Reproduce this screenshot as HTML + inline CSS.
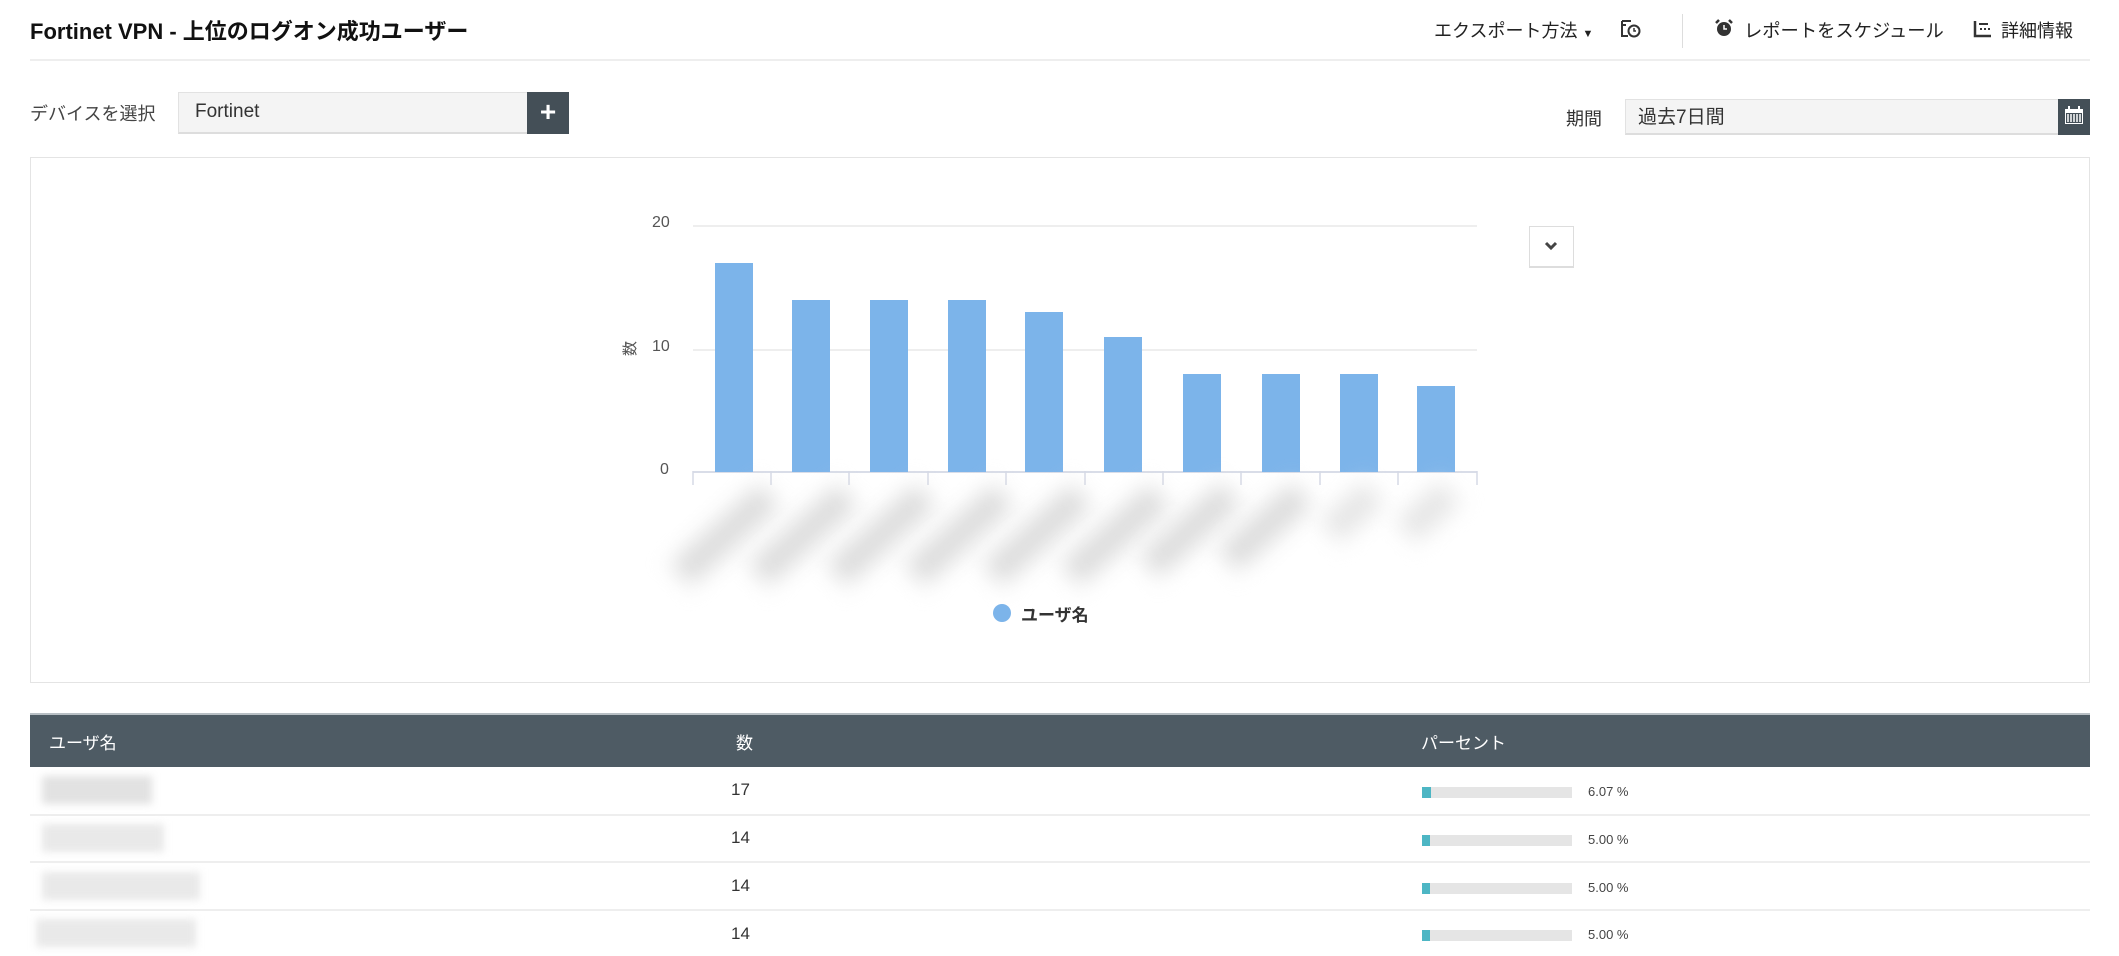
<!DOCTYPE html>
<html><head><meta charset="utf-8">
<style>
*{margin:0;padding:0;box-sizing:border-box}
body{width:2119px;height:956px;background:#fff;font-family:"Liberation Sans","Noto Sans CJK JP",sans-serif;color:#222;position:relative;overflow:hidden}
.a{position:absolute;white-space:nowrap}
.blur{position:absolute;background:#d8d8d8;filter:blur(5px)}
.lb{position:absolute;width:120px;height:30px;transform:rotate(-42deg);background:#dcdcdc;filter:blur(11px)}
</style></head><body>
<div class="a" style="left:30px;top:14px;font-size:22px;font-weight:bold;color:#111">Fortinet VPN - 上位のログオン成功ユーザー</div>
<div class="a" style="left:30px;top:59px;width:2060px;height:2px;background:#eeeeee"></div>

<div class="a" style="left:1434px;top:17px;font-size:18px;color:#222">エクスポート方法 <span style="font-size:11px">▼</span></div>
<svg class="a" style="left:1620px;top:19px" width="22" height="20" viewBox="0 0 22 20"><path d="M2 2h9M2 2v15h6M2 6h4" stroke="#333" stroke-width="2" fill="none"/><circle cx="14" cy="12" r="5.5" stroke="#333" stroke-width="2" fill="none"/><path d="M14 9v3h2" stroke="#333" stroke-width="1.5" fill="none"/></svg>
<div class="a" style="left:1682px;top:14px;width:1px;height:34px;background:#ddd"></div>
<svg class="a" style="left:1714px;top:18px" width="20" height="20" viewBox="0 0 20 20"><circle cx="10" cy="11" r="7" fill="#333"/><path d="M2 5l3-3M18 5l-3-3" stroke="#333" stroke-width="2.5"/><path d="M10 7v4h3" stroke="#fff" stroke-width="1.5" fill="none"/></svg>
<div class="a" style="left:1744px;top:17px;font-size:18.3px">レポートをスケジュール</div>
<svg class="a" style="left:1973px;top:20px" width="19" height="18" viewBox="0 0 19 18"><path d="M2 1v15h16" stroke="#333" stroke-width="2.5" fill="none"/><path d="M6 4h9M7 9h2M11 9h2M15 9h2" stroke="#333" stroke-width="2"/></svg>
<div class="a" style="left:2001px;top:17px;font-size:18px">詳細情報</div>

<div class="a" style="left:30px;top:100px;font-size:18px;color:#444">デバイスを選択</div>
<div class="a" style="left:178px;top:92px;width:350px;height:42px;background:#f4f4f4;border:1px solid #e2e2e2;border-bottom:2px solid #ddd"></div>
<div class="a" style="left:195px;top:101px;font-size:19px;color:#333">Fortinet</div>
<div class="a" style="left:527px;top:92px;width:42px;height:42px;background:#444f57;color:#fff;font-size:28px;font-weight:bold;text-align:center;line-height:40px">+</div>

<div class="a" style="left:1566px;top:105px;font-size:18px;color:#333">期間</div>
<div class="a" style="left:1625px;top:99px;width:434px;height:36px;background:#f4f4f4;border:1px solid #e2e2e2;border-bottom:2px solid #ddd"></div>
<div class="a" style="left:1638px;top:102px;font-size:19px;color:#333">過去7日間</div>
<div class="a" style="left:2058px;top:99px;width:32px;height:36px;background:#444f57"></div>
<svg class="a" style="left:2062px;top:104px" width="24" height="24" viewBox="0 0 24 24"><rect x="3" y="5" width="18" height="15" fill="#fff"/><rect x="4" y="9" width="16" height="10" fill="#444f57"/><path d="M6 10v8M9 10v8M12 10v8M15 10v8M18 10v8" stroke="#fff" stroke-width="1.5"/><path d="M7 2v5M17 2v5" stroke="#fff" stroke-width="2"/></svg>

<div class="a" style="left:30px;top:157px;width:2060px;height:526px;border:1px solid #e4e4e4"></div>
<div class="a" style="left:693px;top:225px;width:784px;height:2px;background:#eee"></div>
<div class="a" style="left:693px;top:349px;width:784px;height:2px;background:#eee"></div>
<div class="a" style="left:652px;top:214px;font-size:16px;color:#555">20</div>
<div class="a" style="left:652px;top:338px;font-size:16px;color:#555">10</div>
<div class="a" style="left:660px;top:461px;font-size:16px;color:#555">0</div>
<div class="a" style="left:622px;top:338px;font-size:15px;color:#555;transform:rotate(-90deg)">数</div>

<div class="a" style="left:693px;top:471px;width:784px;height:2px;background:#d9dde8"></div>
<svg class="a" style="left:692px;top:471px" width="788" height="14"><g stroke="#d6dae6" stroke-width="1.5"><path d="M1 0v14M79 0v14M157 0v14M236 0v14M314 0v14M393 0v14M471 0v14M549 0v14M628 0v14M706 0v14M785 0v14"/></g></svg>

<div class="a" style="left:715px;top:263px;width:38px;height:209px;background:#7cb4ea"></div>
<div class="a" style="left:792px;top:300px;width:38px;height:172px;background:#7cb4ea"></div>
<div class="a" style="left:870px;top:300px;width:38px;height:172px;background:#7cb4ea"></div>
<div class="a" style="left:948px;top:300px;width:38px;height:172px;background:#7cb4ea"></div>
<div class="a" style="left:1025px;top:312px;width:38px;height:160px;background:#7cb4ea"></div>
<div class="a" style="left:1104px;top:337px;width:38px;height:135px;background:#7cb4ea"></div>
<div class="a" style="left:1183px;top:374px;width:38px;height:98px;background:#7cb4ea"></div>
<div class="a" style="left:1262px;top:374px;width:38px;height:98px;background:#7cb4ea"></div>
<div class="a" style="left:1340px;top:374px;width:38px;height:98px;background:#7cb4ea"></div>
<div class="a" style="left:1417px;top:386px;width:38px;height:86px;background:#7cb4ea"></div>

<div class="lb" style="left:665px;top:520px"></div>
<div class="lb" style="left:743px;top:520px"></div>
<div class="lb" style="left:821px;top:520px"></div>
<div class="lb" style="left:899px;top:520px"></div>
<div class="lb" style="left:977px;top:520px"></div>
<div class="lb" style="left:1055px;top:520px"></div>
<div class="lb" style="left:1135px;top:515px;width:110px"></div>
<div class="lb" style="left:1215px;top:512px;width:100px"></div>
<div class="lb" style="left:1322px;top:497px;width:60px;background:#e6e6e6"></div>
<div class="lb" style="left:1398px;top:497px;width:60px;background:#e6e6e6"></div>

<div class="a" style="left:993px;top:604px;width:18px;height:18px;border-radius:50%;background:#7cb4ea"></div>
<div class="a" style="left:1021px;top:601px;font-size:17px;font-weight:bold;color:#333">ユーザ名</div>

<div class="a" style="left:1529px;top:226px;width:45px;height:42px;border:1px solid #ddd;border-bottom:2px solid #ddd;background:#fff"></div>
<svg class="a" style="left:1543px;top:240px" width="16" height="12" viewBox="0 0 16 12"><path d="M3 3l5 5 5-5" stroke="#444" stroke-width="3" fill="none"/></svg>

<div class="a" style="left:30px;top:713px;width:2060px;height:54px;background:#4e5b64;border-top:2px solid #b8bfc4"></div>
<div class="a" style="left:49px;top:729px;font-size:17px;color:#fff">ユーザ名</div>
<div class="a" style="left:736px;top:729px;font-size:17px;color:#fff">数</div>
<div class="a" style="left:1421px;top:729px;font-size:17px;color:#fff">パーセント</div>

<div class="a" style="left:30px;top:814px;width:2060px;height:2px;background:#eee"></div>
<div class="a" style="left:30px;top:861px;width:2060px;height:2px;background:#eee"></div>
<div class="a" style="left:30px;top:909px;width:2060px;height:2px;background:#eee"></div>

<div class="blur" style="left:42px;top:776px;width:110px;height:28px;background:#e2e2e2;filter:blur(4px)"></div>
<div class="blur" style="left:42px;top:824px;width:122px;height:28px;background:#e9e9e9;filter:blur(4px)"></div>
<div class="blur" style="left:42px;top:872px;width:158px;height:28px;background:#e9e9e9;filter:blur(4px)"></div>
<div class="blur" style="left:36px;top:919px;width:160px;height:28px;background:#e9e9e9;filter:blur(4px)"></div>

<div class="a" style="left:731px;top:780px;font-size:17px;color:#333">17</div>
<div class="a" style="left:731px;top:828px;font-size:17px;color:#333">14</div>
<div class="a" style="left:731px;top:876px;font-size:17px;color:#333">14</div>
<div class="a" style="left:731px;top:924px;font-size:17px;color:#333">14</div>

<div class="a" style="left:1422px;top:787px;width:150px;height:11px;background:#e5e5e5"><div style="width:9px;height:11px;background:#4db6c4"></div></div>
<div class="a" style="left:1422px;top:835px;width:150px;height:11px;background:#e5e5e5"><div style="width:8px;height:11px;background:#4db6c4"></div></div>
<div class="a" style="left:1422px;top:883px;width:150px;height:11px;background:#e5e5e5"><div style="width:8px;height:11px;background:#4db6c4"></div></div>
<div class="a" style="left:1422px;top:930px;width:150px;height:11px;background:#e5e5e5"><div style="width:8px;height:11px;background:#4db6c4"></div></div>
<div class="a" style="left:1588px;top:784px;font-size:13px;color:#444">6.07 %</div>
<div class="a" style="left:1588px;top:832px;font-size:13px;color:#444">5.00 %</div>
<div class="a" style="left:1588px;top:880px;font-size:13px;color:#444">5.00 %</div>
<div class="a" style="left:1588px;top:927px;font-size:13px;color:#444">5.00 %</div>
</body></html>
